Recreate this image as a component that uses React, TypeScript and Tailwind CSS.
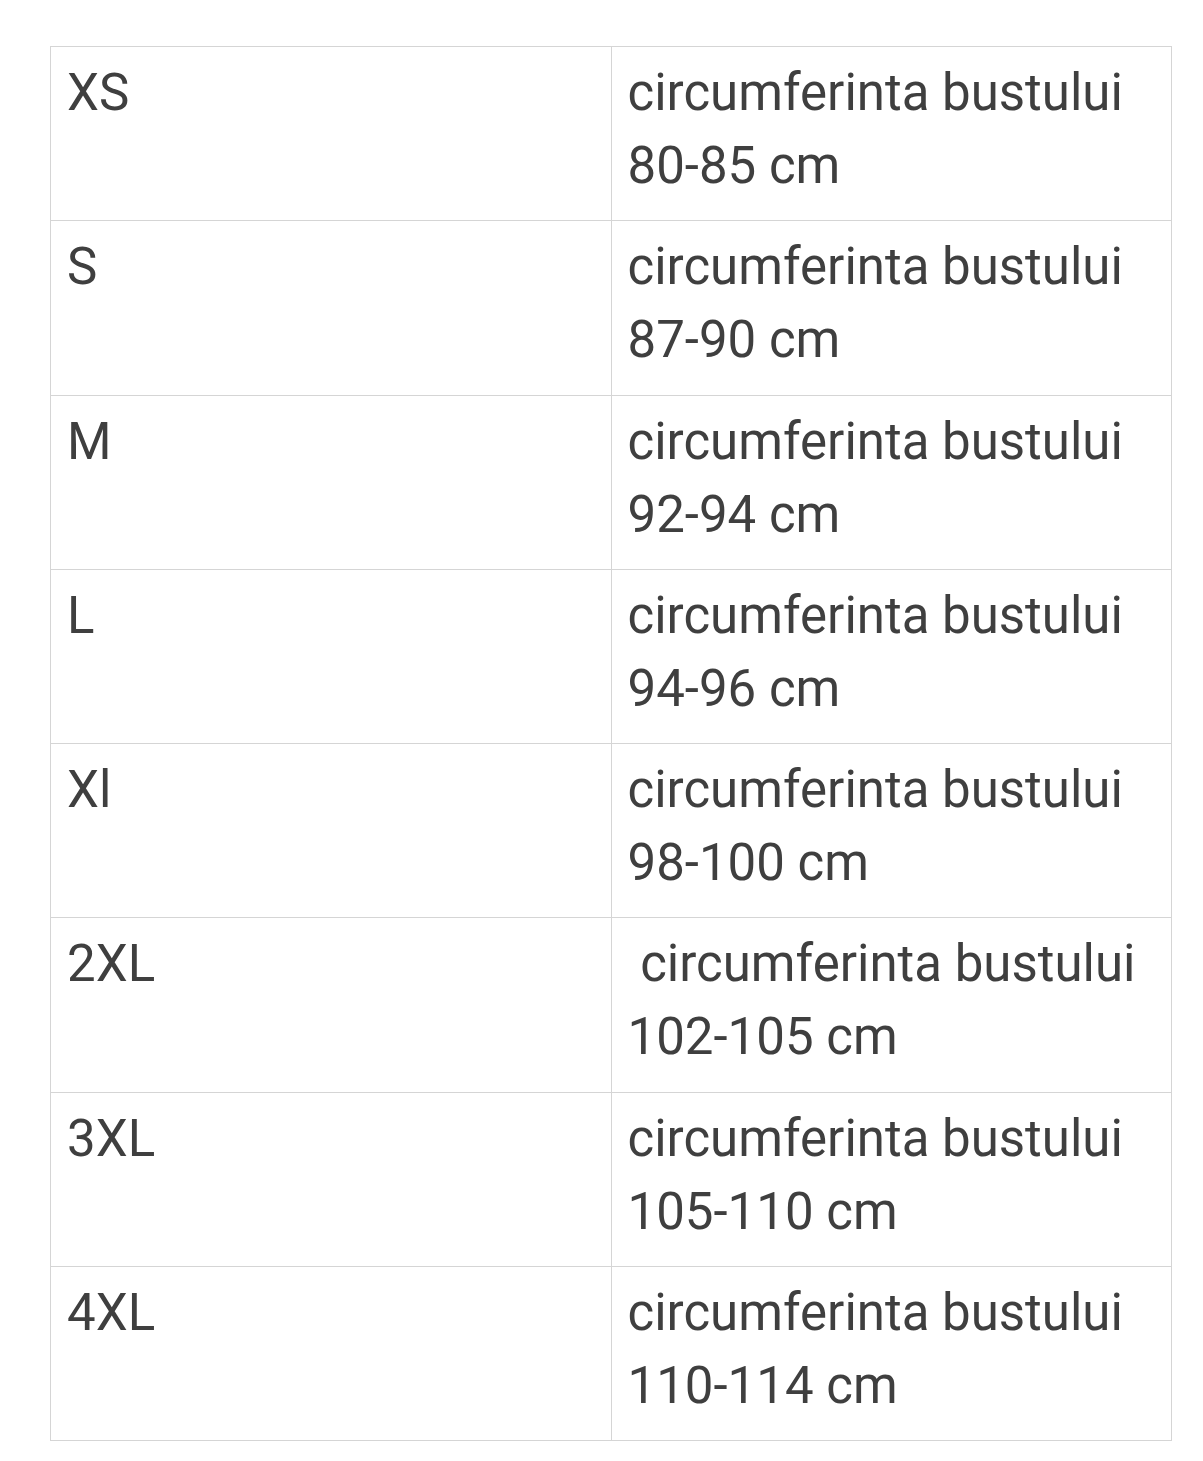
const rows = [
  { size: 'XS', range: '80-85 cm' },
  { size: 'S', range: '87-90 cm' },
  { size: 'M', range: '92-94 cm' },
  { size: 'L', range: '94-96 cm' },
  { size: 'Xl', range: '98-100 cm' },
  { size: '2XL', range: '102-105 cm', lead: true },
  { size: '3XL', range: '105-110 cm' },
  { size: '4XL', range: '110-114 cm' },
];

export default function App() {
  return (
    <div className="min-h-screen bg-white pt-[46px] pl-[50px] font-['Roboto',sans-serif] text-[#3f3f3f]">
      <table className="w-[1122px] table-fixed border-collapse text-[51px] leading-[73px]">
        <tbody>
          {rows.map((r) => (
            <tr key={r.size} className="h-[174.25px]">
              <td className="border border-[#d5d5d5] px-4 pt-[9px] pb-[18px] align-top">{r.size}</td>
              <td className="border border-[#d5d5d5] px-4 pt-[9px] pb-[18px] align-top">
                {r.lead ? '\u00a0circumferinta bustului' : 'circumferinta bustului'} {r.range}
              </td>
            </tr>
          ))}
        </tbody>
      </table>
    </div>
  );
}
